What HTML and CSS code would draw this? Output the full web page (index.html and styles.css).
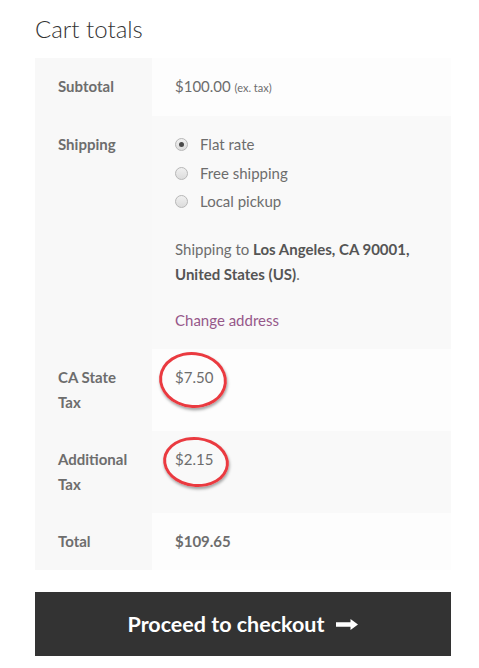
FILE: index.html
```
<!DOCTYPE html>
<html>
<head>
<meta charset="utf-8">
<link rel="stylesheet" href="styles.css">
</head>
<body>
<div class="cart">
  <h2 class="title">Cart totals</h2>
  <table class="totals">
    <tbody>
      <tr class="odd">
        <th>Subtotal</th>
        <td>$100.00 <small class="tax">(ex. tax)</small></td>
      </tr>
      <tr class="even">
        <th>Shipping</th>
        <td>
          <ul class="methods">
            <li><span class="radio checked"></span>Flat rate</li>
            <li><span class="radio"></span>Free shipping</li>
            <li><span class="radio"></span>Local pickup</li>
          </ul>
          <p class="dest">Shipping to <strong>Los Angeles, CA 90001,</strong><br><strong>United States (US)</strong>.</p>
          <a class="change" href="#">Change address</a>
        </td>
      </tr>
      <tr class="odd">
        <th>CA State Tax</th>
        <td><span class="circled c1">$7.50</span></td>
      </tr>
      <tr class="even">
        <th>Additional Tax</th>
        <td><span class="circled c2">$2.15</span></td>
      </tr>
      <tr class="odd">
        <th>Total</th>
        <td><strong>$109.65</strong></td>
      </tr>
    </tbody>
  </table>
  <a class="checkout" href="#">Proceed to checkout <svg class="arrow" width="22" height="11" viewBox="0 0 22 11"><path d="M0 3.3H14.5V0L22 5.5L14.5 11V7.7H0Z" fill="#fff"/></svg></a>
</div>
</body>
</html>
```
FILE: styles.css
```
html, body {
  margin: 0;
  padding: 0;
  background: #fff;
}
body {
  font-family: "Lato", "Liberation Sans", sans-serif;
  font-size: 15px;
  color: #6d6d6d;
}
.cart {
  width: 416px;
  margin-left: 35px;
}
.title {
  margin: 0;
  padding-top: 13px;
  height: 58px;
  box-sizing: border-box;
  font-size: 24px;
  line-height: 32px;
  font-weight: 300;
  color: #333;
}
.totals {
  width: 416px;
  border-collapse: collapse;
  border-spacing: 0;
  table-layout: fixed;
}
.totals th, .totals td {
  padding: 16px 23px;
  line-height: 25px;
  text-align: left;
  vertical-align: top;
}
.totals th {
  width: 71px;
  background: #f8f8f8;
  font-weight: bold;
}
.totals tr.odd td {
  background: #fdfdfd;
}
.totals tr.even td {
  background: #f9f9f9;
}
.tax {
  font-size: 11px;
}
.methods {
  list-style: none;
  margin: 0 0 23px;
  padding: 0;
}
.methods li {
  display: flex;
  align-items: center;
  height: 25px;
  margin-bottom: 3.5px;
}
.radio {
  width: 11px;
  height: 11px;
  border: 1px solid #b8b8b8;
  border-radius: 50%;
  background: linear-gradient(#f0f0f0, #dcdcdc);
  margin-right: 12px;
  box-sizing: content-box;
  display: flex;
  align-items: center;
  justify-content: center;
}
.radio.checked::after {
  content: "";
  width: 5px;
  height: 5px;
  border-radius: 50%;
  background: #4a4a4a;
}
.dest {
  margin: 0 0 21px;
}
.dest strong {
  color: #555;
}
.change {
  color: #96588a;
  text-decoration: none;
}
.circled {
  position: relative;
  display: inline-block;
}
.circled::after {
  content: "";
  position: absolute;
  border: 3px solid #ea3a40;
  border-radius: 50%;
  box-shadow: 1px 2px 3px rgba(0,0,0,0.35);
}
.c1::after {
  left: -16px;
  top: -13px;
  width: 62px;
  height: 50px;
  transform: rotate(6deg);
}
.c2::after {
  left: -12px;
  top: -10px;
  width: 60px;
  height: 44px;
  transform: rotate(6deg);
}
.checkout {
  display: flex;
  align-items: center;
  justify-content: center;
  gap: 12px;
  margin-top: 22px;
  height: 64px;
  background: #333;
  color: #fff;
  font-size: 21.5px;
  font-weight: bold;
  text-decoration: none;
}
```
